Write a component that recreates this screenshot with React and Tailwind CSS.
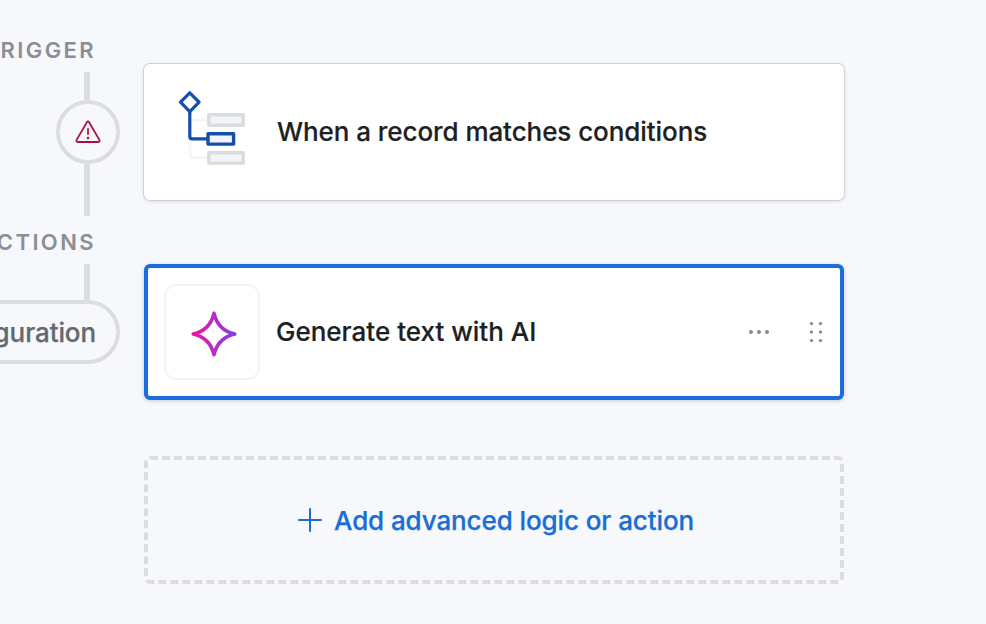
function WarningIcon() {
  return (
    <svg width="26" height="24" viewBox="0 0 26 24" fill="none" stroke="#b10f41" strokeWidth="1.8" strokeLinejoin="round" strokeLinecap="round">
      <path d="M11.9 2.2 1.6 19.9c-.6 1.1 0 2.100 1.200 2.100h20.400c1.200 0 1.800-1 1.200-2.100L14.100 2.200c-.6-1-1.600-1-2.200 0Z" />
      <path d="M13 9v5" />
      <circle cx="13" cy="18" r="1.3" fill="#b10f41" stroke="none" />
    </svg>
  );
}

function ConditionIcon() {
  return (
    <svg className="mb-2" width="68" height="76" viewBox="0 0 68 76" fill="none" strokeLinejoin="round">
      <path d="M12 30.500H30M12 48V65c0 1.800.7 2.500 2.500 2.500H30" stroke="#f5f5fa" strokeWidth="3" />
      <rect x="30.800" y="24.800" width="34.400" height="10.400" fill="#f2f4fb" stroke="#dadbdd" strokeWidth="3.400" />
      <rect x="30.800" y="62.700" width="34.400" height="10.400" fill="#f2f4fb" stroke="#dadbdd" strokeWidth="3.400" />
      <path d="M11.800 22V46.500c0 1.700.8 2.300 2.500 2.300H30" stroke="#144fa8" strokeWidth="3.200" />
      <path d="M11.800 2.800 21.100 12.200 11.800 21.600 2.500 12.200Z" fill="#fff" stroke="#144fa8" strokeWidth="3.200" />
      <rect x="30" y="43.700" width="25.600" height="10.400" fill="#f1f3fd" stroke="#144fa8" strokeWidth="3.400" />
    </svg>
  );
}

function SparkIcon() {
  return (
    <svg width="46" height="46" viewBox="0 0 46 46" fill="none">
      <defs>
        <linearGradient id="spark" x1="0" y1="23" x2="46" y2="23" gradientUnits="userSpaceOnUse">
          <stop stopColor="#f50da0" />
          <stop offset=".5" stopColor="#b62fc4" />
          <stop offset="1" stopColor="#7440ea" />
        </linearGradient>
      </defs>
      <path
        d="M23 2.300C25.500 13 33 20.500 43.700 23C33 25.500 25.500 33 23 43.700C20.500 33 13 25.500 2.300 23C13 20.500 20.500 13 23 2.300Z"
        stroke="url(#spark)" strokeWidth="3.700" strokeLinejoin="round"
      />
    </svg>
  );
}

function Timeline() {
  return (
    <aside className="flex w-[120px] shrink-0 flex-col items-end pt-7">
      <h2 className="mr-6 flex h-11 items-center text-[22px] font-semibold tracking-[2.4px] whitespace-nowrap text-[#8b8e94]">TRIGGER</h2>
      <span className="mr-[30px] h-7 w-1.5 bg-[#dcdde1]" />
      <div className="flex size-16 items-center justify-center rounded-full border-4 border-[#dcdde1]">
        <WarningIcon />
      </div>
      <span className="mr-[30px] h-[52px] w-1.5 bg-[#dcdde1]" />
      <h2 className="mr-6 flex h-12 items-center pt-1 text-[22px] font-semibold tracking-[2.4px] whitespace-nowrap text-[#8b8e94]">ACTIONS</h2>
      <span className="mr-[30px] h-9 w-1.5 bg-[#dcdde1]" />
      <div className="flex h-16 items-center rounded-full border-4 border-[#dcdde1] px-5 text-[26px] font-medium tracking-[-0.1px] whitespace-nowrap text-[#646871] [-webkit-text-stroke:0.25px]">
        Configuration
      </div>
    </aside>
  );
}

export default function App() {
  return (
    <main className="flex h-[624px] w-[986px] overflow-hidden bg-[#f7f8fc] font-['Inter','Liberation_Sans',sans-serif] text-[26px] font-medium text-[#1d1f25]">
      <Timeline />
      <section className="ml-6 w-[700px] pt-16">
        <div className="flex h-[136px] items-center rounded-md bg-white pl-[34px] shadow-[0_0_0_1px_#d0d1d5,0_1px_4px_#00000026]">
          <ConditionIcon />
          <span className="ml-[31px] pb-0.5 tracking-[-0.07px] whitespace-nowrap [-webkit-text-stroke:0.2px]">When a record matches conditions</span>
        </div>
        <div className="mt-16 flex h-[136px] items-center rounded-md border-4 border-[#1b6ddd] bg-white pl-4 shadow-[0_1px_4px_#00000030]">
          <div className="flex size-24 items-center justify-center rounded-xl border-2 border-[#f2f2f2] pt-1 pl-1">
            <SparkIcon />
          </div>
          <span className="ml-4 pb-0.5 whitespace-nowrap [-webkit-text-stroke:0.2px]">Generate text with AI</span>
          <svg className="mr-[39px] ml-auto" width="22" height="6" fill="#8b8b8d">
            <circle cx="3" cy="3" r="2" />
            <circle cx="11" cy="3" r="2" />
            <circle cx="19" cy="3" r="2" />
          </svg>
          <svg className="mr-[17px]" width="14" height="22" fill="#858587">
            <circle cx="2.500" cy="2.500" r="1.600" />
            <circle cx="11.500" cy="2.500" r="1.600" />
            <circle cx="2.500" cy="11" r="1.600" />
            <circle cx="11.500" cy="11" r="1.600" />
            <circle cx="2.500" cy="19.500" r="1.600" />
            <circle cx="11.500" cy="19.500" r="1.600" />
          </svg>
        </div>
        <button className="mt-14 flex h-32 w-full items-center rounded-md border-4 border-dashed border-[#dcdde1] pl-[150px] text-[#1b6dd5]">
          <svg width="24" height="24" fill="none" stroke="#1b6dc8" strokeWidth="2" strokeLinecap="round">
            <path d="M12 1v22M1 12h22" />
          </svg>
          <span className="ml-3 tracking-[-0.1px] whitespace-nowrap [-webkit-text-stroke:0.25px]">Add advanced logic or action</span>
        </button>
      </section>
    </main>
  );
}
